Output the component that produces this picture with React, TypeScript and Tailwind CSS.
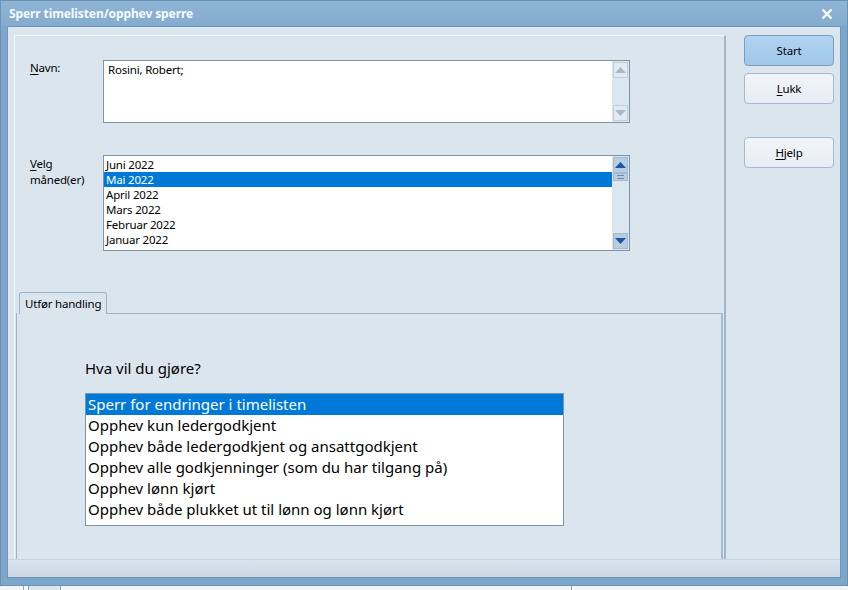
import React, { useState } from 'react';

const font = { fontFamily: '"Noto Sans", "Open Sans", sans-serif' };

const months = ['Juni 2022', 'Mai 2022', 'April 2022', 'Mars 2022', 'Februar 2022', 'Januar 2022'];

const actions = [
  'Sperr for endringer i timelisten',
  'Opphev kun ledergodkjent',
  'Opphev både ledergodkjent og ansattgodkjent',
  'Opphev alle godkjenninger (som du har tilgang på)',
  'Opphev lønn kjørt',
  'Opphev både plukket ut til lønn og lønn kjørt',
];

function Arrow({ up, color }: { up?: boolean; color: string }) {
  return (
    <svg width="11" height="6" viewBox="0 0 11 6">
      {up ? <path d="M0 6 L5.5 0 L11 6 Z" fill={color} /> : <path d="M0 0 L11 0 L5.5 6 Z" fill={color} />}
    </svg>
  );
}

function WinButton({ label, u, primary }: { label: string; u?: boolean; primary?: boolean }) {
  return (
    <button
      className={
        primary
          ? 'w-[90px] h-[31px] rounded-[4px] border border-[#7d9dbd] bg-gradient-to-b from-[#b0d3f0] to-[#a0c8ea] text-[11.5px] tracking-[-0.2px] text-black'
          : 'w-[90px] h-[31px] rounded-[4px] border border-[#a6bbcf] bg-gradient-to-b from-[#f1f5f9] to-[#e6edf4] text-[11.5px] tracking-[-0.2px] text-black'
      }
    >
      {u ? (
        <>
          <span className="underline underline-offset-2">{label[0]}</span>
          {label.slice(1)}
        </>
      ) : (
        label
      )}
    </button>
  );
}

export default function App() {
  const [month, setMonth] = useState(1);
  const [action, setAction] = useState(0);

  return (
    <div className="w-[848px] h-[590px] bg-[#f3f6f9] overflow-hidden flex flex-col" style={font}>
      {/* window frame */}
      <div className="w-[848px] h-[586px] bg-[#7ea6c9] border border-[#6a92b6] flex flex-col px-[6px] pb-[7px]">
        {/* title bar */}
        <div className="h-[25px] flex items-center justify-between bg-gradient-to-b from-[#8fb5d5] to-[#84acce] -mx-[6px] px-[8px]">
          <span className="text-[12px] font-bold text-[#f7fafc] tracking-[-0.1px]">Sperr timelisten/opphev sperre</span>
          <svg width="12" height="12" viewBox="0 0 12 12" className="mr-[6px]">
            <path d="M1.5 1.5 L10.5 10.5 M10.5 1.5 L1.5 10.5" stroke="#ffffff" strokeWidth="2.2" />
          </svg>
        </div>

        {/* client area */}
        <div className="flex-1 flex flex-col bg-[#dbe5ee] border border-[#6e96ba]">
          <div className="flex-1 flex">
            {/* left pane */}
            <div className="ml-[6px] mt-[8px] w-[712px] flex flex-col border-t border-l border-[#f3f6f9] border-r-2 border-r-[#a3b5c6]">
              <div className="flex mt-[24px] pl-[15px]">
                <div className="w-[73px] text-[11.5px] tracking-[-0.2px] text-black leading-[15px]">
                  <span className="underline underline-offset-2">N</span>avn:
                </div>
                <div className="w-[527px] h-[63px] bg-white border border-[#7d93aa] flex">
                  <div className="flex-1 text-[11.5px] tracking-[-0.2px] leading-[15px] text-black px-[4px] pt-[1px]">Rosini, Robert;</div>
                  <div className="w-[17px] bg-[#dce6ef] flex flex-col justify-between p-[1px]">
                    <div className="h-[16px] bg-[#e3ebf2] border border-[#bccddc] flex items-center justify-center">
                      <Arrow up color="#aab9ca" />
                    </div>
                    <div className="h-[16px] bg-[#e3ebf2] border border-[#bccddc] flex items-center justify-center">
                      <Arrow color="#aab9ca" />
                    </div>
                  </div>
                </div>
              </div>

              <div className="flex mt-[32px] pl-[15px]">
                <div className="w-[73px] text-[11.5px] tracking-[-0.2px] text-black leading-[16px] pt-[1px]">
                  <span className="underline underline-offset-2">V</span>elg
                  <br />
                  måned(er)
                </div>
                <div className="w-[527px] h-[96px] bg-white border border-[#7d93aa] flex">
                  <div className="flex-1 pt-px">
                    {months.map((m, i) => (
                      <div
                        key={m}
                        onClick={() => setMonth(i)}
                        className={
                          i === month
                            ? 'h-[15px] leading-[15px] text-[11.5px] tracking-[-0.2px] px-[2px] bg-[#0078d7] text-white'
                            : 'h-[15px] leading-[15px] text-[11.5px] tracking-[-0.2px] px-[2px] text-black'
                        }
                      >
                        {m}
                      </div>
                    ))}
                  </div>
                  <div className="w-[17px] bg-[#dce6ef] flex flex-col p-[1px]">
                    <div className="h-[16px] bg-[#b9cde0] border border-[#a3bbd2] flex items-center justify-center">
                      <Arrow up color="#1c57a4" />
                    </div>
                    <div className="h-[8px] bg-[#b9cde0] border border-[#a3bbd2] flex flex-col items-center justify-center gap-[2px]">
                      <div className="w-[7px] h-px bg-[#6a8fb3]" />
                      <div className="w-[7px] h-px bg-[#6a8fb3]" />
                    </div>
                    <div className="flex-1" />
                    <div className="h-[16px] bg-[#b9cde0] border border-[#a3bbd2] flex items-center justify-center">
                      <Arrow color="#1c57a4" />
                    </div>
                  </div>
                </div>
              </div>

              {/* tab control */}
              <div className="mt-[41px] ml-[1px] mr-[1px] flex-1 flex flex-col">
                <div className="flex items-end">
                  <div className="ml-[3px] h-[22px] px-[5px] pt-[3px] rounded-t-[3px] border border-b-0 border-[#9fb3c6] bg-[#dbe5ee] text-[11.5px] tracking-[-0.2px] leading-[15px] text-black">
                    Utfør handling
                  </div>
                  <div className="flex-1 border-b border-[#9fb3c6]" />
                </div>
                <div className="flex-1 border-l border-r-2 border-l-[#9fb3c6] border-r-[#a9bbcc] -mt-px pt-[46px] pl-[68px]">
                  <div className="text-[15px] text-black leading-[18px]">Hva vil du gjøre?</div>
                  <div className="mt-[16px] w-[479px] h-[133px] bg-white border border-[#7d93aa]">
                    {actions.map((a, i) => (
                      <div
                        key={a}
                        onClick={() => setAction(i)}
                        className={
                          i === action
                            ? 'h-[21px] leading-[21px] text-[15px] px-[2px] bg-[#0078d7] text-white'
                            : 'h-[21px] leading-[21px] text-[15px] px-[2px] text-black'
                        }
                      >
                        {a}
                      </div>
                    ))}
                  </div>
                </div>
              </div>
            </div>

            {/* buttons */}
            <div className="ml-[18px] mt-[8px] flex flex-col">
              <WinButton label="Start" primary />
              <div className="mt-[7px]">
                <WinButton label="Lukk" u />
              </div>
              <div className="mt-[33px]">
                <WinButton label="Hjelp" u />
              </div>
            </div>
          </div>

          {/* status bar */}
          <div className="h-[18px] border-t border-[#c3d3e0] bg-gradient-to-b from-[#d8e3ec] to-[#cbd9e5]" />
        </div>
      </div>

      {/* window behind */}
      <div className="flex-1 flex">
        <div className="ml-[23px] w-[6px] border-l border-r border-[#8aa6c0]" />
        <div className="w-[32px] border-r border-[#8aa6c0] bg-[#dbe5ee]" />
        <div className="ml-[510px] w-px bg-[#8aa6c0]" />
      </div>
    </div>
  );
}
